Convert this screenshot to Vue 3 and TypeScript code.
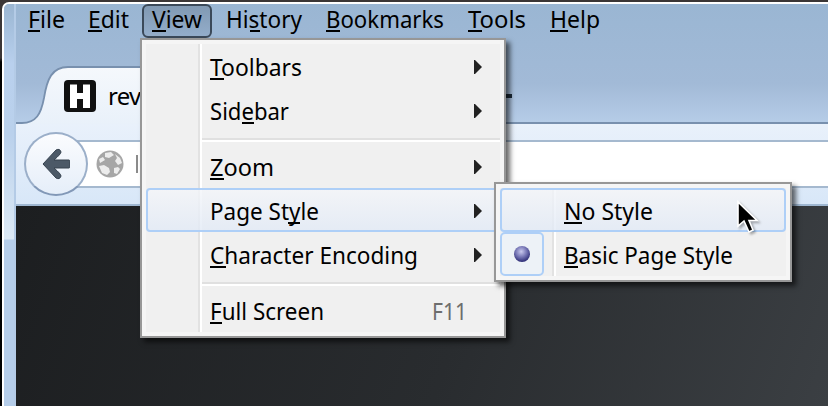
<script setup lang="ts">
interface Label {
  text: string
  width: number
  keyX: number
  keyW: number
}
interface MenuRow extends Label {
  submenu?: boolean
  shortcut?: string
  hot?: boolean
  separated?: boolean
  checked?: boolean
}

const menubar: Label[] = [
  { text: 'File', width: 37, keyX: 0, keyW: 12 },
  { text: 'Edit', width: 41, keyX: 0, keyW: 14 },
  { text: 'View', width: 50, keyX: 0, keyW: 14 },
  { text: 'History', width: 76, keyX: 24, keyW: 10 },
  { text: 'Bookmarks', width: 118, keyX: 0, keyW: 14 },
  { text: 'Tools', width: 58, keyX: 0, keyW: 14 },
  { text: 'Help', width: 50, keyX: 0, keyW: 18 },
]
const viewMenu: MenuRow[] = [
  { text: 'Toolbars', width: 92, keyX: 0, keyW: 14, submenu: true },
  { text: 'Sidebar', width: 79, keyX: 32, keyW: 12, submenu: true },
  { text: 'Zoom', width: 64, keyX: 0, keyW: 14, submenu: true, separated: true },
  { text: 'Page Style', width: 109, keyX: 78, keyW: 12, submenu: true, hot: true },
  { text: 'Character Encoding', width: 208, keyX: 0, keyW: 16, submenu: true },
  { text: 'Full Screen', width: 114, keyX: 0, keyW: 12, shortcut: 'F11', separated: true },
]
const styleMenu: MenuRow[] = [
  { text: 'No Style', width: 89, keyX: 0, keyW: 18, hot: true },
  { text: 'Basic Page Style', width: 169, keyX: 0, keyW: 14, checked: true },
]
</script>

<template>
  <div class="desktop">
    <div class="frame">
      <div class="edge"></div>
      <div class="window">
        <nav class="menubar">
          <div v-for="m in menubar" :key="m.text" class="entry" :class="{ open: m.text === 'View' }">
            <svg class="label" :width="m.width" height="34">
              <text x="0" y="24" :textLength="m.width" lengthAdjust="spacingAndGlyphs">{{ m.text }}</text>
              <rect :x="m.keyX" y="26" :width="m.keyW" height="2" />
            </svg>
          </div>
        </nav>
        <div class="tabs">
          <svg class="tab-shape" width="812" height="86" viewBox="16 38 812 86">
            <defs>
              <linearGradient id="tab" x1="0" y1="0" x2="0" y2="1">
                <stop offset="0" stop-color="#f5f8fc" />
                <stop offset="1" stop-color="#e9f1fa" />
              </linearGradient>
            </defs>
            <path d="M16 123H22C36 123 41 114 44 98C47 79 52 67 68 67H460C476 67 481 79 484 98C487 114 492 123 506 123H828V125H16Z" fill="url(#tab)" />
            <path d="M16 123H22C36 123 41 114 44 98C47 79 52 67 68 67H460C476 67 481 79 484 98C487 114 492 123 506 123H828" fill="none" stroke="#7890ae" stroke-width="1.8" />
            <rect x="504" y="94" width="8" height="4" fill="#1c2a38" />
          </svg>
          <div class="tab">
            <svg width="32" height="32" viewBox="0 0 32 32">
              <rect width="32" height="32" rx="4" fill="#111" />
              <path d="M6 4.5H13V13H19V4.5H26V28H19V19H13V28H6Z" fill="#fff" />
            </svg>
            <span>reveal.js</span>
          </div>
        </div>
        <div class="toolbar">
          <div class="back">
            <svg width="28" height="32" viewBox="0 0 28 32">
              <path d="M1 16L14 2Q18 0 19 4Q19 6 12 12H27Q28 12 28 14V18Q28 20 27 20H12Q19 26 19 28Q18 32 14 30Z" fill="#4c5967" stroke="#36424f" stroke-width="1" stroke-linejoin="round" />
            </svg>
          </div>
          <div class="address">
            <svg class="globe" width="28" height="28" viewBox="0 0 28 28">
              <circle cx="14" cy="14" r="13.5" fill="#a6a6a6" />
              <path d="M9 3L15 2L18 5L13 8L9 7ZM19 4L24 8L26 13L22 15L19 11L21 8ZM3 9L7 7L9 10L4 13ZM3 16L8 15L13 18L14 22L11 25L6 23ZM18 18L22 17L24 19L21 24L18 23Z" fill="#ececec" />
            </svg>
            <span class="caret"></span>
          </div>
        </div>
        <div class="page"></div>
      </div>
    </div>

    <div class="menu view-menu">
      <div class="rows">
        <template v-for="r in viewMenu" :key="r.text">
          <div v-if="r.separated" class="separator"></div>
          <div class="row" :class="{ hot: r.hot }">
            <svg class="label" :width="r.width" height="44">
              <text x="0" y="32" :textLength="r.width" lengthAdjust="spacingAndGlyphs">{{ r.text }}</text>
              <rect :x="r.keyX" y="34" :width="r.keyW" height="2" />
            </svg>
            <svg v-if="r.submenu" class="arrow" width="8" height="14">
              <path d="M0 0H1L8 7L1 14H0Z" fill="#222" />
            </svg>
            <svg v-if="r.shortcut" class="label shortcut" width="35" height="44">
              <text x="0" y="32" textLength="35" lengthAdjust="spacingAndGlyphs">{{ r.shortcut }}</text>
            </svg>
          </div>
        </template>
      </div>
    </div>

    <div class="menu style-menu">
      <div class="rows">
        <div v-for="r in styleMenu" :key="r.text" class="row" :class="{ hot: r.hot }">
          <div v-if="r.checked" class="check"><i class="dot"></i></div>
          <svg class="label" :width="r.width" height="44">
            <text x="0" y="32" :textLength="r.width" lengthAdjust="spacingAndGlyphs">{{ r.text }}</text>
            <rect :x="r.keyX" y="34" :width="r.keyW" height="2" />
          </svg>
        </div>
      </div>
    </div>

    <svg class="cursor" width="24" height="36" viewBox="0 0 24 36">
      <path d="M2 2V26L8 21L13 32L17 30L13 20.5H21Z" fill="#000" stroke="#fff" stroke-width="1.6" />
    </svg>
  </div>
</template>

<style>
body {
  margin: 0;
  overflow: hidden;
}
</style>

<style scoped>
.desktop {
  position: relative;
  box-sizing: border-box;
  width: 828px;
  height: 406px;
  padding: 2px 0 0 2px;
  overflow: hidden;
  background: linear-gradient(#3b3636 0, #3b3636 58px, #000 62px);
  font: 24px 'Noto Sans', 'Open Sans', sans-serif;
}
.frame {
  display: flex;
  height: 404px;
  box-sizing: border-box;
  border-top: 2px solid #fff;
  border-left: 2px solid #fff;
  border-top-left-radius: 7px;
  overflow: hidden;
  background: #9bb6d2;
}
.edge {
  width: 12px;
  flex: none;
  box-sizing: border-box;
  border-right: 2px solid #b4cbe6;
  background: linear-gradient(#9bb6d2 0, #a9c3e0 30px, #b9d0ed 60px, #bad1ec 130px, #dce9f5 235px, #b5cde9 236px, #b5cde9 100%);
}
.window {
  flex: 1;
  display: flex;
  flex-direction: column;
  background: linear-gradient(#9ab6d3 0, #a2bad7 80px, #b6cde8 120px);
}
.menubar {
  display: flex;
  gap: 4px;
  height: 34px;
  flex: none;
  padding-left: 2px;
}
.entry {
  box-sizing: border-box;
  height: 34px;
  padding: 0 10px;
}
.entry:nth-child(1) { width: 56px; }
.entry:nth-child(2) { width: 60px; }
.open {
  padding: 0 8px;
  border: 2px solid #3b4959;
  border-radius: 6px;
  background: linear-gradient(#8199b3, #93adca);
}
.open .label { margin-top: -2px; }
.label {
  display: block;
  flex: none;
  overflow: visible;
}
.tabs {
  display: grid;
  height: 86px;
  flex: none;
}
.tab-shape, .tab { grid-area: 1 / 1; }
.tab {
  display: flex;
  align-items: center;
  gap: 12px;
  height: 32px;
  padding: 42px 0 0 48px;
}
.tab span {
  letter-spacing: -0.8px;
  margin-top: -2px;
}
.toolbar {
  display: flex;
  align-items: flex-start;
  height: 80px;
  flex: none;
  padding: 8px 0 0 8px;
  box-sizing: border-box;
  background: linear-gradient(#e9f1fb, #d8e7f8);
}
.back {
  display: grid;
  place-items: center;
  width: 64px;
  height: 64px;
  flex: none;
  z-index: 1;
  box-sizing: border-box;
  border: 2px solid #9bafc9;
  border-bottom-color: #8298b7;
  border-radius: 50%;
  background: linear-gradient(#fbfcfe, #e5eef9);
}
.address {
  display: flex;
  align-items: center;
  flex: 1;
  height: 48px;
  margin: 8px 0 0 -20px;
  padding-left: 28px;
  box-sizing: border-box;
  border-top: 2px solid #a5b9cf;
  border-bottom: 2px solid #a5b9cf;
  background: #fff;
}
.caret {
  width: 2px;
  height: 18px;
  margin-left: 12px;
  background: #8b8b8b;
}
.page {
  flex: 1;
  border-top: 2px solid #9fb7d1;
  background: linear-gradient(110deg, #1c1e20, #292c2f 55%, #3b3f43);
}
.menu {
  position: absolute;
  box-sizing: border-box;
  padding: 4px;
  border: 2px solid #979797;
  background: #f5f5f5;
  box-shadow: 4px 4px 5px rgba(0, 0, 0, 0.6);
}
.view-menu {
  left: 140px;
  top: 38px;
  width: 366px;
  height: 300px;
}
.style-menu {
  left: 494px;
  top: 182px;
  width: 298px;
  height: 100px;
}
.rows {
  height: 100%;
  background: linear-gradient(90deg, #f0f0f0 52px, #e2e2e2 52px, #e2e2e2 54px, #fff 54px, #fff 56px, #f0f0f0 56px);
}
.row {
  display: flex;
  align-items: center;
  height: 44px;
  box-sizing: border-box;
  padding: 0 18px 0 64px;
}
.hot {
  padding: 0 16px 0 62px;
  border: 2px solid #aecff7;
  border-radius: 4px;
  background: linear-gradient(rgba(243, 245, 249, 0.8), rgba(226, 234, 246, 0.8));
}
.separator {
  height: 4px;
  margin: 6px 0 0 56px;
  border-top: 2px solid #e0e0e0;
  background: linear-gradient(#fff 2px, transparent 2px);
}
.arrow {
  margin-left: auto;
  margin-top: 2px;
}
.shortcut {
  margin-left: auto;
  margin-right: 15px;
  fill: #6d6d6d;
}
.check {
  display: grid;
  place-items: center;
  width: 44px;
  height: 44px;
  box-sizing: border-box;
  flex: none;
  margin: 0 20px 0 -64px;
  border: 2px solid #aecff7;
  border-radius: 5px;
  background: #edf2f7;
}
.dot {
  width: 16px;
  height: 16px;
  border-radius: 50%;
  background: radial-gradient(circle at 45% 35%, #c9c9ee, #7676b5 40%, #25256f 80%);
}
.cursor {
  position: absolute;
  left: 736px;
  top: 200px;
  overflow: visible;
  filter: drop-shadow(2px 2px 1px rgba(0, 0, 0, 0.3));
}
</style>
